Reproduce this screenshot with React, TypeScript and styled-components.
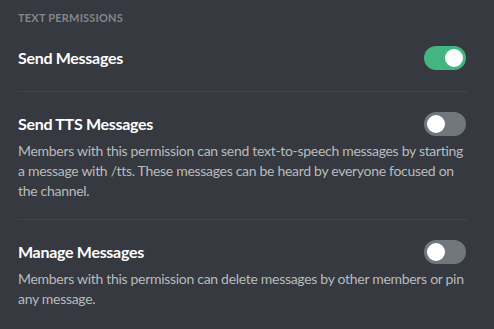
import React from "react";
import styled, { createGlobalStyle } from "styled-components";

const Global = createGlobalStyle`
  html, body { margin: 0; padding: 0; background: #36393f; }
  body { font-family: Lato, "Open Sans", sans-serif; -webkit-font-smoothing: antialiased; }
`;

const Page = styled.div`
  width: 494px;
  height: 329px;
  background: #36393f;
  padding: 10px 26px 0 18px;
  box-sizing: border-box;
  overflow: hidden;
`;

const SectionHeader = styled.div`
  font-size: 11px;
  line-height: 16px;
  font-weight: 700;
  color: #83868c;
  text-transform: uppercase;
  letter-spacing: 0.2px;
`;

const Row = styled.div<{ $last?: boolean; $hasDesc?: boolean }>`
  padding: 22px 0 ${(p) => (p.$hasDesc ? "18px" : "23px")};
  border-bottom: ${(p) => (p.$last ? "none" : "1px solid #41444a")};
`;

const TitleLine = styled.div`
  display: flex;
  align-items: center;
  justify-content: space-between;
  height: 20px;
`;

const Title = styled.div`
  font-size: 16px;
  line-height: 20px;
  font-weight: 700;
  letter-spacing: -0.3px;
  color: #ffffff;
`;

const Description = styled.div`
  margin-top: 7px;
  font-size: 14px;
  line-height: 20px;
  letter-spacing: -0.3px;
  color: #b9bbbe;
`;

const Track = styled.div<{ $on: boolean }>`
  width: 42px;
  height: 24px;
  border-radius: 12px;
  background: ${(p) => (p.$on ? "#43b581" : "#72767d")};
  display: flex;
  align-items: center;
  justify-content: ${(p) => (p.$on ? "flex-end" : "flex-start")};
  padding: 0 3px;
  box-sizing: border-box;
  flex-shrink: 0;
  margin-right: 2px;
`;

const Knob = styled.div`
  width: 18px;
  height: 18px;
  border-radius: 50%;
  background: #ffffff;
`;

const Toggle = ({ on }: { on: boolean }) => (
  <Track $on={on}>
    <Knob />
  </Track>
);

const perms = [
  { title: "Send Messages", on: true, desc: "" },
  {
    title: "Send TTS Messages",
    on: false,
    desc: "Members with this permission can send text-to-speech messages by starting a message with /tts. These messages can be heard by everyone focused on the channel.",
  },
  {
    title: "Manage Messages",
    on: false,
    desc: "Members with this permission can delete messages by other members or pin any message.",
  },
];

export default function App() {
  return (
    <>
      <Global />
      <Page>
        <SectionHeader>Text Permissions</SectionHeader>
        {perms.map((p, i) => (
          <Row key={p.title} $last={i === perms.length - 1} $hasDesc={!!p.desc}>
            <TitleLine>
              <Title>{p.title}</Title>
              <Toggle on={p.on} />
            </TitleLine>
            {p.desc && <Description>{p.desc}</Description>}
          </Row>
        ))}
      </Page>
    </>
  );
}
